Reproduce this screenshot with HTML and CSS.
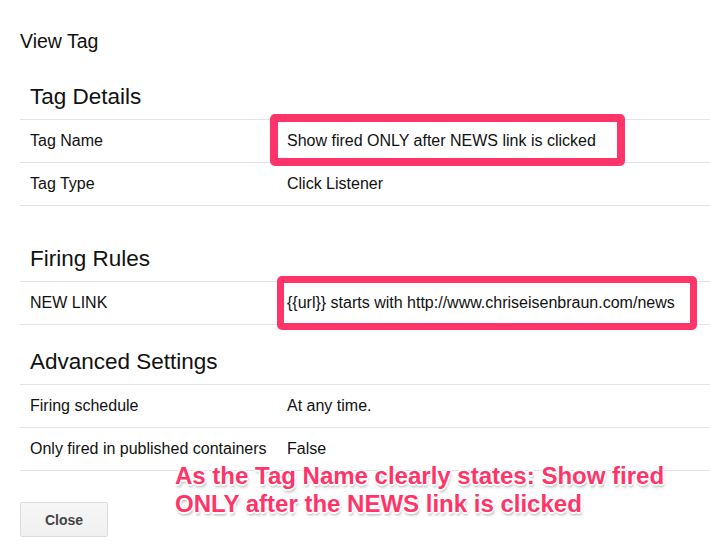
FILE: index.html
```html
<!DOCTYPE html>
<html>
<head>
<meta charset="utf-8">
<title>View Tag</title>
<link rel="stylesheet" href="styles.css">
</head>
<body>
<div class="page">
  <h1 class="title">View Tag</h1>

  <section class="section section-first">
    <h2 class="section-title">Tag Details</h2>
    <div class="table">
      <div class="row"><div class="label">Tag Name</div><div class="value">Show fired ONLY after NEWS link is clicked</div></div>
      <div class="row"><div class="label">Tag Type</div><div class="value">Click Listener</div></div>
    </div>
  </section>

  <section class="section section-second">
    <h2 class="section-title">Firing Rules</h2>
    <div class="table">
      <div class="row"><div class="label">NEW LINK</div><div class="value">{{url}} starts with http://www.chriseisenbraun.com/news</div></div>
    </div>
  </section>

  <section class="section section-third">
    <h2 class="section-title">Advanced Settings</h2>
    <div class="table">
      <div class="row"><div class="label">Firing schedule</div><div class="value">At any time.</div></div>
      <div class="row"><div class="label">Only fired in published containers</div><div class="value">False</div></div>
    </div>
  </section>

  <div class="actions">
    <button class="btn" type="button">Close</button>
  </div>

  <div class="highlight highlight-name"></div>
  <div class="highlight highlight-rule"></div>
  <div class="annotation">As the Tag Name clearly states: Show fired<br>ONLY after the NEWS link is clicked</div>
</div>
</body>
</html>
```

FILE: styles.css
```css
html, body {
  margin: 0;
  padding: 0;
  background: #ffffff;
}

body {
  font-family: "Liberation Sans", Arial, Helvetica, sans-serif;
  color: #111111;
  width: 710px;
  height: 551px;
  overflow: hidden;
}

.page {
  position: relative;
  padding: 29px 0 0 20px;
  height: 551px;
  box-sizing: border-box;
}

.title {
  margin: 0;
  font-size: 19.5px;
  line-height: 24px;
  font-weight: normal;
}

.section-title {
  margin: 0 0 8px 0;
  padding-left: 10px;
  font-size: 22.5px;
  line-height: 28px;
  font-weight: normal;
}

.section-first { margin-top: 30px; }
.section-second { margin-top: 39px; }
.section-third { margin-top: 23px; }

.table {
  border-bottom: 1px solid #e3e3e3;
}

.row {
  display: grid;
  grid-template-columns: 267px 1fr;
  height: 42px;
  align-items: center;
  border-top: 1px solid #e3e3e3;
  font-size: 16px;
  line-height: 20px;
}

.label {
  padding-left: 10px;
  white-space: nowrap;
}

.value {
  white-space: nowrap;
}

.actions {
  margin-top: 31px;
}

.btn {
  width: 88px;
  height: 35px;
  border: 1px solid #dcdcdc;
  border-radius: 2px;
  background: linear-gradient(#f6f6f6, #f0f0f0);
  font-family: "Liberation Sans", Arial, sans-serif;
  font-weight: bold;
  font-size: 14px;
  color: #444444;
  padding: 0;
}

.highlight {
  position: absolute;
  border: 8px solid #ff3468;
  border-radius: 5px;
  box-sizing: border-box;
}

.highlight-name {
  left: 270px;
  top: 114px;
  width: 355px;
  height: 52px;
}

.highlight-rule {
  left: 277px;
  top: 276px;
  width: 420px;
  height: 54px;
  border-width: 7px;
}

.annotation {
  position: absolute;
  left: 175px;
  top: 462px;
  font-size: 24px;
  line-height: 28px;
  font-weight: bold;
  color: #ff3468;
  white-space: nowrap;
  text-shadow:
    -1px -1px 0 #fff, 1px -1px 0 #fff, -1px 1px 0 #fff, 1px 1px 0 #fff,
    0 -2px 0 #fff, 0 2px 0 #fff, -2px 0 0 #fff, 2px 0 0 #fff,
    1px 3px 3px rgba(0, 0, 0, 0.35);
}
```
